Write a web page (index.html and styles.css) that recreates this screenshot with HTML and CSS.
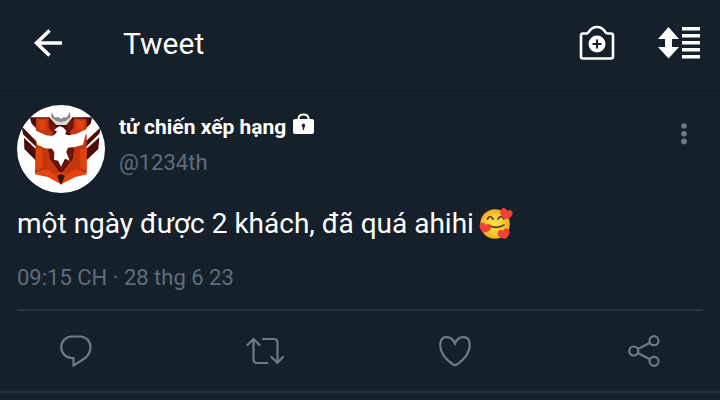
FILE: index.html
```html
<!DOCTYPE html>
<html lang="vi">
<head>
<meta charset="utf-8">
<meta name="viewport" content="width=device-width, initial-scale=1">
<title>Tweet</title>
<link rel="stylesheet" href="styles.css">
</head>
<body>
<header class="bar">
  <button class="icon-btn" type="button" aria-label="Back">
    <svg width="28" height="28" viewBox="0 0 28 28" fill="none" stroke="currentColor" stroke-width="3.6"><path d="M28 14H3M15.500 1.500L2.500 14L15.500 26.500"/></svg>
  </button>
  <h1 class="title">Tweet</h1>
  <div class="tools">
    <button class="icon-btn" type="button" aria-label="Add photo">
      <svg width="36" height="36" viewBox="0 0 36 36" fill="none" stroke="currentColor"><path d="M4 8.500H7.500C10.500 8.500 10 2 18 2S25.500 8.500 28.500 8.500H32Q34 8.500 34 10.500V31.500Q34 33.500 32 33.500H4Q2 33.500 2 31.500V10.500Q2 8.500 4 8.500Z" stroke-width="2.600"/><circle cx="18" cy="19" r="8.500" fill="currentColor" stroke="none"/><path class="cut" d="M18 14.500V23.500M13.500 19H22.500" stroke-width="2"/></svg>
    </button>
    <button class="icon-btn" type="button" aria-label="Sort">
      <svg width="42" height="32" viewBox="0 0 42 32" fill="currentColor"><path d="M10.500 0L21 12H14V20H21L10.500 31.500L0 20H7V12H0ZM24 0H42V3.500H24ZM24 7H42V10.500H24ZM24 14H42V17.500H24ZM24 21H42V24.500H24ZM24 28H42V31.500H24Z"/></svg>
    </button>
  </div>
</header>
<main class="tweet">
  <div class="author">
    <svg class="avatar" viewBox="0 0 264 264" role="img" aria-label="Avatar">
      <defs><clipPath id="round"><circle cx="132" cy="132" r="132"/></clipPath></defs>
      <circle cx="132" cy="132" r="132" fill="#fff"/>
      <g clip-path="url(#round)">
        <path d="M14 64L57 108V125L18 88ZM21 98L57 133V167L22 132ZM252 66L207 108V125L247 86ZM247 97L207 133V167L244 132Z" fill="#4b0b08"/>
        <path d="M38 37H97L132 56L167 37H226L221 56L207 70V178L132 220L57 178V70L44 56Z" fill="#4b0b08"/>
        <path d="M57 40L95 40L110 82L98 105V160L132 206L168 160V105L158 82L172 40L209 42V208L175 193L132 221L92 193L54 208Z" fill="#c6360b"/>
        <path d="M65 48L86 44V74H68ZM202 48L178 44L181 74H199ZM57 131H76V186L57 197ZM209 131H190V186L209 197Z" fill="#df460f"/>
        <path d="M94 43L117 58L113 88L96 70ZM170 43L148 58L152 88L169 70ZM92 134L116 125L112 160L132 187L154 160L150 125L174 134L158 170L132 196L107 170Z" fill="#701509"/>
        <path d="M54 208L92 192L115 209L132 200L150 209L175 192L210 208L175 216L132 238L92 216Z" fill="#e8430f"/>
        <path d="M120 212L132 207L144 212L132 241Z" fill="#32100c"/>
        <path d="M98 38L124 42L132 49L140 42L166 38L148 60H118Z" fill="#ddd"/>
        <path d="M103 21L113 37H126L132 42L139 37H150L158 21L161 37L147 47L132 52L116 47L103 37Z" fill="#8d8888"/>
        <path d="M22 58L59 78L87 91L104 93L114 88L120 79L111 76L119 68L128 64L138 67L148 77L145 88L155 91L179 86L209 72L233 64L205 91L198 119L174 126L153 128L148 141L158 167L144 161L132 185L123 167L111 164L112 142L105 131L84 130L61 119L55 98Z" fill="#fff"/>
      </g>
    </svg>
    <div class="identity">
      <div class="name">tử chiến xếp hạng
        <svg class="lock" width="21" height="22" viewBox="0 0 21 22" role="img" aria-label="Protected account"><path d="M5.500 8V5.500C5.500 0 15.500 0 15.500 5.500V8" fill="none" stroke="currentColor" stroke-width="2"/><rect y="6" width="21" height="15" rx="2" fill="currentColor"/><path class="keyhole" d="M10.500 10.500A2 2 0 0 1 11.500 14L11 17H10L9.500 14A2 2 0 0 1 10.500 10.500Z"/></svg>
      </div>
      <div class="handle">@1234th</div>
    </div>
    <button class="icon-btn more" type="button" aria-label="More">
      <svg width="6" height="22" viewBox="0 0 6 22" fill="currentColor"><circle cx="3" cy="3" r="2.800"/><circle cx="3" cy="10.700" r="2.800"/><circle cx="3" cy="18.400" r="2.800"/></svg>
    </button>
  </div>
  <p class="message">một ngày được 2 khách, đã quá ahihi
    <svg class="emoji" width="34" height="32" viewBox="0 0 34 32" role="img" aria-label="Smiling face with hearts">
      <defs><radialGradient id="face"><stop offset="0" stop-color="#ffe04b"/><stop offset=".65" stop-color="#fcc92f"/><stop offset="1" stop-color="#f4a623"/></radialGradient>
      <path id="heart" d="M0 4.500C-10 1-4-8 0-3C4-8 10 1 0 4.500Z"/></defs>
      <circle cx="16" cy="16" r="14.800" fill="url(#face)"/>
      <path d="M8.500 11Q11 6 14 11M19 11Q22 6 25 11M11 18Q18 21 25 17" fill="none" stroke="#51351d" stroke-width="1.700" stroke-linecap="round"/>
      <g fill="#ef4136"><use href="#heart" transform="translate(27 6) rotate(18) scale(1.150)"/><use href="#heart" transform="translate(6 20) rotate(15) scale(1.050)"/><use href="#heart" transform="translate(25 26) rotate(-18) scale(1.100)"/></g>
    </svg>
  </p>
  <p class="time">09:15 CH · 28 thg 6 23</p>
  <div class="actions">
    <button class="icon-btn" type="button" aria-label="Reply">
      <svg width="32" height="32" viewBox="0 0 32 32"><path d="M12 1.500H20A10.500 10.500 0 0 1 30.500 12C30.500 18 27 22 23 24.500L13.500 30.500V23H12A10.700 10.700 0 0 1 12 1.500Z"/></svg>
    </button>
    <button class="icon-btn" type="button" aria-label="Retweet">
      <svg width="38" height="28" viewBox="0 0 38 28" stroke-linecap="round"><path d="M1.500 8L7.500 2L13.500 8M7.500 2V22Q7.500 26 11.500 26H21.500M17 2H27.500Q31.500 2 31.500 6V26M25.500 20L31.500 26L37 20"/></svg>
    </button>
    <button class="icon-btn" type="button" aria-label="Like">
      <svg width="32" height="32" viewBox="0 0 32 32"><path d="M16 8.500C12-.500 1 0 1.200 10.500C1.400 19 9 26 14 29.500Q16 30.700 18 29.500C23 26 30.600 19 30.800 10.500C31 0 20-.500 16 8.500Z"/></svg>
    </button>
    <button class="icon-btn" type="button" aria-label="Share">
      <svg width="32" height="32" viewBox="0 0 32 32"><circle cx="5.700" cy="16" r="4.500"/><circle cx="26" cy="5.700" r="4.500"/><circle cx="26" cy="26.300" r="4.500"/><path d="M9.800 14L22 7.800M9.800 18L22 24.200"/></svg>
    </button>
  </div>
</main>
</body>
</html>
```
FILE: styles.css
```css
* { box-sizing: border-box; }

body {
  margin: 0;
  background: #16202a;
  color: #fff;
  font-family: Roboto, "Noto Sans", sans-serif;
}

svg { display: block; }

.icon-btn {
  display: flex;
  align-items: center;
  justify-content: center;
  padding: 0;
  border: 0;
  background: none;
  color: inherit;
}

.bar {
  display: flex;
  align-items: center;
  padding: 21px 20px 25px 34px;
  border-bottom: 2px solid #131b24;
}

.title {
  margin: 0 0 0 61px;
  padding-top: 2px;
  font-size: 30px;
  line-height: 42px;
  font-weight: 400;
}

.tools {
  display: flex;
  align-items: center;
  gap: 43px;
  margin-left: auto;
}

.cut { stroke: #16202a; }

.tweet {
  padding: 13px 17px 0;
  border-bottom: 2px solid #26323d;
}

.author {
  display: flex;
  align-items: flex-start;
  gap: 14px;
}

.avatar {
  width: 88px;
  height: 88px;
}

.identity { padding-top: 6px; }

.name {
  display: flex;
  align-items: center;
  gap: 7px;
  font-size: 21px;
  line-height: 32px;
  font-weight: 700;
}

.lock { margin-bottom: 6px; }

.keyhole { fill: #16202a; }

.handle {
  color: #5f6d7a;
  font-size: 22px;
  line-height: 40px;
}

.more {
  margin: 18px 16px 0 auto;
  color: #6c7a86;
}

.message {
  display: flex;
  align-items: center;
  gap: 5px;
  margin: 11px 0 0;
  font-size: 28px;
  line-height: 40px;
}

.time {
  margin: 16px 0 13px;
  color: #5f6d7a;
  font-size: 22px;
  line-height: 36px;
}

.actions {
  display: flex;
  align-items: center;
  justify-content: space-between;
  padding: 20px 39px;
  border-top: 2px solid #26323d;
  color: #6c7a86;
}

.actions .icon-btn {
  width: 40px;
  height: 40px;
}

.actions svg {
  fill: none;
  stroke: currentColor;
  stroke-width: 2.2px;
}
```
